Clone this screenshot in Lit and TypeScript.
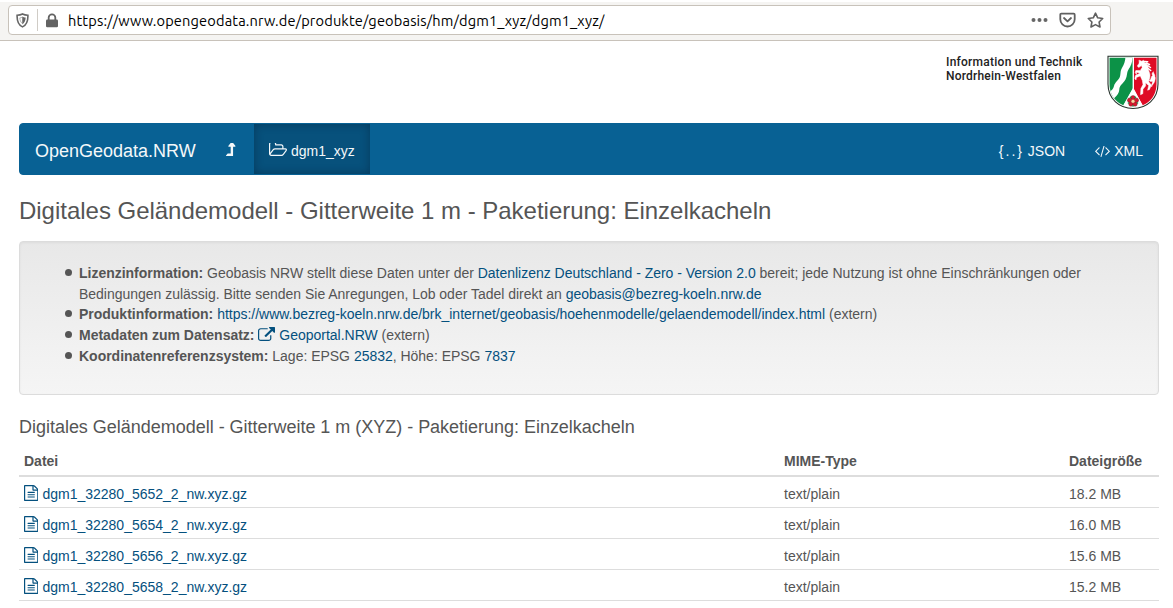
import { LitElement, html, css } from "lit";
import { customElement, property } from "lit/decorators.js";

const icons: Record<string, { box: string; d: string }> = {
  up: {
    box: "384 128 1024 1344",
    d: "M1395 477q-17 35-57 35h-192v928q0 14-9 23t-23 9h-704q-21 0-29-18-8-20 4-35l160-192q9-11 25-11h320v-704h-192q-40 0-57-35-17-37 9-68l320-384q18-22 49-22t49 22l320 384q27 32 9 68z",
  },
  folder: {
    box: "64 256 1909 1280",
    d: "M1845 931q0-35-53-35h-1088q-40 0-85.5 21.5t-71.5 52.5l-294 363q-18 24-18 40 0 35 53 35h1088q40 0 86-22t71-53l294-363q18-22 18-39zm-1141-163h768v-160q0-40-28-68t-68-28h-576q-40 0-68-28t-28-68v-64q0-40-28-68t-68-28h-320q-40 0-68 28t-28 68v853l256-315q44-53 116-87.5t140-34.5zm1269 163q0 62-46 120l-295 363q-43 53-116 87.5t-140 34.5h-1088q-92 0-158-66t-66-158v-960q0-92 66-158t158-66h320q92 0 158 66t66 158v32h544q92 0 158 66t66 158v160h192q54 0 99 24.5t67 70.5q15 32 15 68z",
  },
  code: {
    box: "45 310 1830 1340",
    d: "M617 1399l-50 50q-10 10-23 10t-23-10l-466-466q-10-10-10-23t10-23l466-466q10-10 23-10t23 10l50 50q10 10 10 23t-10 23l-393 393 393 393q10 10 10 23t-10 23zm591-1067l-373 1291q-4 13-15.5 19.5t-23.5 2.5l-62-17q-13-4-19.5-15.5t-2.5-24.5l373-1291q4-13 15.5-19.5t23.5-2.5l62 17q13 4 19.5 15.5t2.5 24.5zm657 651l-466 466q-10 10-23 10t-23-10l-50-50q-10-10-10-23t10-23l393-393-393-393q-10-10-10-23t10-23l50-50q10-10 23-10t23 10l466 466q10 10 10 23t-10 23z",
  },
  external: {
    box: "64 61 1792 1536",
    d: "M1472 989v320q0 119-84.5 203.5t-203.5 84.5h-832q-119 0-203.5-84.5t-84.5-203.5v-832q0-119 84.5-203.5t203.5-84.5h704q14 0 23 9t9 23v64q0 14-9 23t-23 9h-704q-66 0-113 47t-47 113v832q0 66 47 113t113 47h832q66 0 113-47t47-113v-320q0-14 9-23t23-9h64q14 0 23 9t9 23zm384-864v512q0 26-19 45t-45 19-45-19l-176-176-652 652q-10 10-23 10t-23-10l-114-114q-10-10-10-23t10-23l652-652-176-176q-19-19-19-45t19-45 45-19h512q26 0 45 19t19 45z",
  },
  file: {
    box: "128 0 1536 1792",
    d: "M1596 380q28 28 48 76t20 88v1152q0 40-28 68t-68 28h-1344q-40 0-68-28t-28-68v-1600q0-40 28-68t68-28h896q40 0 88 20t76 48zm-444-244v376h376q-10-29-22-41l-313-313q-12-12-41-22zm384 1528v-1024h-416q-40 0-68-28t-28-68v-416h-768v1536h1280zm-1024-864q0-14 9-23t23-9h704q14 0 23 9t9 23v64q0 14-9 23t-23 9h-704q-14 0-23-9t-9-23v-64zm736 224q14 0 23 9t9 23v64q0 14-9 23t-23 9h-704q-14 0-23-9t-9-23v-64q0-14 9-23t23-9h704zm0 256q14 0 23 9t9 23v64q0 14-9 23t-23 9h-704q-14 0-23-9t-9-23v-64q0-14 9-23t23-9h704z",
  },
};

@customElement("fa-icon")
class FaIcon extends LitElement {
  @property() name = "file";
  static styles = css`
    :host { display: inline-block; flex: none; line-height: 0; }
    .glyph { display: block; width: 100%; height: 100%; fill: currentColor; }
  `;
  render() {
    const i = icons[this.name];
    return html`<svg class="glyph" viewBox=${i.box} preserveAspectRatio="none"><path d=${i.d}></path></svg>`;
  }
}

@customElement("browser-bar")
class BrowserBar extends LitElement {
  static styles = css`
    :host { display: block; box-sizing: border-box; height: 41px; padding: 5px 0 0 8px; background: linear-gradient(#fff 2px, #f5f4f2 2px); border-bottom: 1px solid #c8c2ba; }
    .field { box-sizing: border-box; display: flex; align-items: center; width: 1103px; height: 30px; border: 1px solid #c8c2ba; border-radius: 4px; background: #fff; padding-left: 8px; }
    .shield { margin-left: -1px; margin-right: 1px; }
    .sep { width: 1px; height: 22px; background: #d0ccc6; margin: 0 7px 0 7px; }
    .url { font: 14.600px/20px Ubuntu, "Noto Sans", sans-serif; color: #000; margin: 1px 0 0 9px; white-space: nowrap; flex: 1; letter-spacing: 0.150px; }
    svg { display: block; flex: none; }
    .tools { display: flex; align-items: center; gap: 11px; padding-right: 6px; }
  `;
  render() {
    return html`<div class="field">
      <svg class="shield" width="13" height="15" viewBox="0 0 13 15"><path d="M6.5 1 C8.5 2 10.3 2.2 11.9 2.3 C12.1 8 10.8 11.8 6.5 13.9 C2.2 11.8 .9 8 1.1 2.3 C2.7 2.2 4.5 2 6.5 1z" fill="none" stroke="#666" stroke-width="1.6"/><path d="M6.5 3.6C7.500 4.300 8.400 4.500 9.700 4.600C9.500 7.800 8.600 9.800 6.500 11.200z" fill="#666"/><path d="M6.500 4.100C5.600 4.600 4.600 4.800 3.800 4.900C4 7.400 4.600 9.200 6.500 10.700z" fill="none" stroke="#666" stroke-width=".5"/></svg>
      <div class="sep"></div>
      <svg width="14" height="15" viewBox="0 0 14 15"><rect x="1" y="6.5" width="12" height="7.8" rx="1.2" fill="#636363"/><path d="M3.7 7V4.6a3.3 3.3 0 0 1 6.6 0V7" fill="none" stroke="#636363" stroke-width="1.8"/></svg>
      <div class="url">https://www.opengeodata.nrw.de/produkte/geobasis/hm/dgm1_xyz/dgm1_xyz/</div>
      <div class="tools">
        <svg width="17" height="6" viewBox="0 0 17 6" fill="#666"><circle cx="2.5" cy="3" r="2"/><circle cx="8.5" cy="3" r="2"/><circle cx="14.5" cy="3" r="2"/></svg>
        <svg width="17" height="16" viewBox="0 0 17 16" fill="none" stroke="#606060" stroke-width="1.8" stroke-linecap="round" stroke-linejoin="round"><path d="M2.3 1.7h12.4a1 1 0 0 1 1 1v4.6a7.2 7.2 0 0 1-14.4 0V2.7a1 1 0 0 1 1-1z"/><path d="M5 6l3.5 3.3L12 6"/></svg>
        <svg width="17" height="16" viewBox="0 0 17 16" fill="none" stroke="#606060" stroke-width="1.6" stroke-linejoin="round"><path d="M8.5 1.2l2.2 4.6 5 .7-3.6 3.5.9 5-4.5-2.4L4 15l.9-5L1.3 6.5l5-.7z"/></svg>
      </div>
    </div>`;
  }
}

@customElement("nrw-crest")
class NrwCrest extends LitElement {
  static styles = css`
    :host { display: block; width: 52px; height: 55px; }
    .crest { display: block; }
  `;
  render() {
    return html`<svg class="crest" width="52" height="55" viewBox="0 0 52 55">
      <defs><clipPath id="s"><path d="M2.5 2.7H49.5V29C49.5 43 39 52 26 52S2.5 43 2.5 29z"/></clipPath></defs>
      <path d="M1 1.2H51V29C51 44 39.500 53.500 26 53.500S1 44 1 29z" fill="#fff" stroke="#26332c" stroke-width="1.1"/>
      <g clip-path="url(#s)">
        <path d="M2 2H25.600V34L15.600 52H2z" fill="#0c9247"/>
        <path d="M27 2H50V52H36.400L27 34z" fill="#df0b25"/>
        <path d="M18.400 2H25.600C25.400 8 23.500 11.500 21.500 14.500C19.500 17.500 20.600 20.500 18.500 24.500C16 29 12.500 30 12.300 34.500C12 39 9 41.500 6.500 44L2 37C5 35.500 6.200 34 7 31C8 27 11.500 25.500 12.800 22C14 19 12.800 16.500 15.200 12.500C17 9.500 18.300 6 18.400 2z" fill="#fff"/>
        <path d="M26 33L15.300 52H36.700z" fill="#fff"/>
        <g fill="#fff" stroke="#fff" stroke-linejoin="round" stroke-linecap="round">
          <path stroke-width=".5" d="M32.300 5.200L34.800 6.300L36.500 5.200L37.400 7.200C40 8.300 41.200 10.500 41.300 13.500C41.400 16.500 43.600 18.300 42.900 22C42.700 24 41.700 25 41.800 27L44.400 30L42.500 34.500L40.600 35.200L41.700 30.500L38.500 27.800L38.700 30.800L36 34.300L35.800 38.700L33.500 39.700L33.900 33.500L36 29.600L35.300 25.500L33.300 20.900L29.400 22.400L29 25L27.800 23.500L28.400 20.500L33 18.300L29.700 17.300L29.300 19.500L28.200 17.500L28.800 15.500L33.300 15.400L35.200 12.500L34.500 10.600L31.700 12.500L30.300 11L32 8.400z"/>
          <path fill="none" stroke-width="1.500" d="M37.500 6.500L40.700 6.800M39.400 8.300L42.500 9.500M40.800 10.700L43.500 12.500M41.300 13.500L43.700 15.500"/>
          <path stroke-width=".4" d="M42.300 25.500C44.800 24 43.600 21.600 45.600 20.400C44.700 19.300 44.800 17.400 46.700 16.700C45.900 18.300 48.400 19.100 47.900 21.700C49 22.800 47.800 25.200 47.700 26.500C46.900 29 45.200 29.600 44.600 32C43.800 29.800 45.900 28 45.400 26.300C44.500 26.400 43.400 27.200 42.300 25.500z"/>
        </g>
        <g fill="#d91731" stroke="#552b20" stroke-width=".4"><circle cx="26" cy="42.800" r="2.300"/><circle cx="22.700" cy="45.200" r="2.300"/><circle cx="24" cy="49" r="2.300"/><circle cx="28" cy="49" r="2.300"/><circle cx="29.300" cy="45.200" r="2.300"/></g>
        <g fill="#159448"><circle cx="23.600" cy="42.400" r=".8"/><circle cx="28.400" cy="42.400" r=".8"/><circle cx="21.500" cy="48" r=".8"/><circle cx="30.500" cy="48" r=".8"/><circle cx="26" cy="51" r=".8"/></g>
        <circle cx="26" cy="46.300" r="2" fill="#f5d6a4" stroke="#b62a24" stroke-width=".6"/>
      </g>
    </svg>`;
  }
}

@customElement("app-root")
class AppRoot extends LitElement {
  files = [
    { name: "dgm1_32280_5652_2_nw.xyz.gz", size: "18.2 MB" },
    { name: "dgm1_32280_5654_2_nw.xyz.gz", size: "16.0 MB" },
    { name: "dgm1_32280_5656_2_nw.xyz.gz", size: "15.6 MB" },
    { name: "dgm1_32280_5658_2_nw.xyz.gz", size: "15.2 MB" },
  ];
  static styles = css`
    :host { display: block; height: 608px; overflow: hidden; background: #fff; color: #555; font: 14px/20px "Liberation Sans", Arial, sans-serif; }
    .page { padding: 0 14px 0 19px; }
    .head { height: 82px; display: flex; justify-content: flex-end; box-sizing: border-box; padding-top: 14px; }
    .agency { width: 161px; padding-top: 1px; font: 500 12px/13.500px Roboto, sans-serif; color: #222; white-space: nowrap; }
    .l1 { letter-spacing: 0.250px; }
    .l2 { letter-spacing: 0.200px; }
    .nav { display: flex; box-sizing: border-box; height: 52px; border: 1px solid #086194; border-radius: 4px; background: #086194; color: #f4f8fa; align-items: stretch; }
    .brand { font-size: 18px; line-height: 20px; padding: 17px 0 0 15px; width: 195px; box-sizing: border-box; }
    .upbtn { display: flex; align-items: flex-start; width: 39px; box-sizing: border-box; padding: 19px 0 0 11px; }
    .i-up { width: 9.500px; height: 13px; }
    .active { display: flex; box-sizing: border-box; width: 116px; padding: 17px 0 0 15px; gap: 4px; background: #07517c; box-shadow: inset 0 0 10px rgba(0, 20, 40, .36); }
    .i-folder { width: 18px; height: 13px; margin-top: 2px; }
    .right { margin-left: auto; display: flex; padding: 17px 15px 0 0; gap: 30px; }
    .braces { letter-spacing: 2px; }
    .xml { display: flex; gap: 4px; }
    .i-code { width: 15px; height: 11px; margin-top: 5px; }
    .title { font-size: 24px; line-height: 26px; font-weight: 400; margin: 23px 0 17px; white-space: nowrap; letter-spacing: -0.020px; }
    .well { box-sizing: border-box; height: 154px; border: 1px solid #dcdcdc; border-radius: 4px; background: linear-gradient(#e8e8e8, #f5f5f5); box-shadow: inset 0 1px 3px rgba(0,0,0,.05); padding: 21px 19px; }
    .facts { margin: 0; padding: 0 0 0 40px; list-style: none; line-height: 20.700px; white-space: nowrap; letter-spacing: -0.015px; }
    .fact { display: flex; }
    .dot { flex: none; width: 7px; height: 7px; border-radius: 50%; background: #555; margin: 6px 7px 0 -14px; }
    .link { color: #04507e; }
    .i-ext { width: 17px; height: 14px; margin: 0 4px 0 0; vertical-align: -1px; color: #04507e; }
    .sub { font-size: 18px; line-height: 20px; font-weight: 400; margin: 22px 0 8px; white-space: nowrap; letter-spacing: -0.020px; }
    .row { display: grid; grid-template-columns: 760px 285px 1fr; box-sizing: border-box; height: 31px; border-bottom: 1px solid #ddd; padding: 7px 5px 0; }
    .th { font-weight: 700; height: 32px; padding-top: 6px; border-bottom-width: 2px; }
    .name { display: flex; gap: 4px; }
    .i-file { width: 14.400px; height: 16px; margin-top: 1px; }
  `;
  render() {
    return html`
      <browser-bar></browser-bar>
      <div class="page">
        <div class="head">
          <div class="agency"><div class="l1">Information und Technik</div><div class="l2">Nordrhein-Westfalen</div></div>
          <nrw-crest></nrw-crest>
        </div>
        <div class="nav">
          <div class="brand">OpenGeodata.NRW</div>
          <div class="upbtn"><fa-icon class="i-up" name="up"></fa-icon></div>
          <div class="active"><fa-icon class="i-folder" name="folder"></fa-icon><span>dgm1_xyz</span></div>
          <div class="right"><span class="json"><span class="braces">{..}</span> JSON</span><span class="xml"><fa-icon class="i-code" name="code"></fa-icon><span>XML</span></span></div>
        </div>
        <h1 class="title">Digitales Geländemodell - Gitterweite 1 m - Paketierung: Einzelkacheln</h1>
        <div class="well"><ul class="facts">
          <li class="fact"><i class="dot"></i><div><b>Lizenzinformation:</b> Geobasis NRW stellt diese Daten unter der <span class="link">Datenlizenz Deutschland - Zero - Version 2.0</span> bereit; jede Nutzung ist ohne Einschränkungen oder<br>Bedingungen zulässig. Bitte senden Sie Anregungen, Lob oder Tadel direkt an <span class="link">geobasis@bezreg-koeln.nrw.de</span></div></li>
          <li class="fact"><i class="dot"></i><div><b>Produktinformation:</b> <span class="link">https://www.bezreg-koeln.nrw.de/brk_internet/geobasis/hoehenmodelle/gelaendemodell/index.html</span> (extern)</div></li>
          <li class="fact"><i class="dot"></i><div><b>Metadaten zum Datensatz:</b> <fa-icon class="i-ext" name="external"></fa-icon><span class="link">Geoportal.NRW</span> (extern)</div></li>
          <li class="fact"><i class="dot"></i><div><b>Koordinatenreferenzsystem:</b> Lage: EPSG <span class="link">25832</span>, Höhe: EPSG <span class="link">7837</span></div></li>
        </ul></div>
        <h2 class="sub">Digitales Geländemodell - Gitterweite 1 m (XYZ) - Paketierung: Einzelkacheln</h2>
        <div class="row th"><span>Datei</span><span>MIME-Type</span><span>Dateigröße</span></div>
        ${this.files.map((f) => html`<div class="row"><span class="name link"><fa-icon class="i-file" name="file"></fa-icon><span>${f.name}</span></span><span>text/plain</span><span>${f.size}</span></div>`)}
      </div>`;
  }
}
